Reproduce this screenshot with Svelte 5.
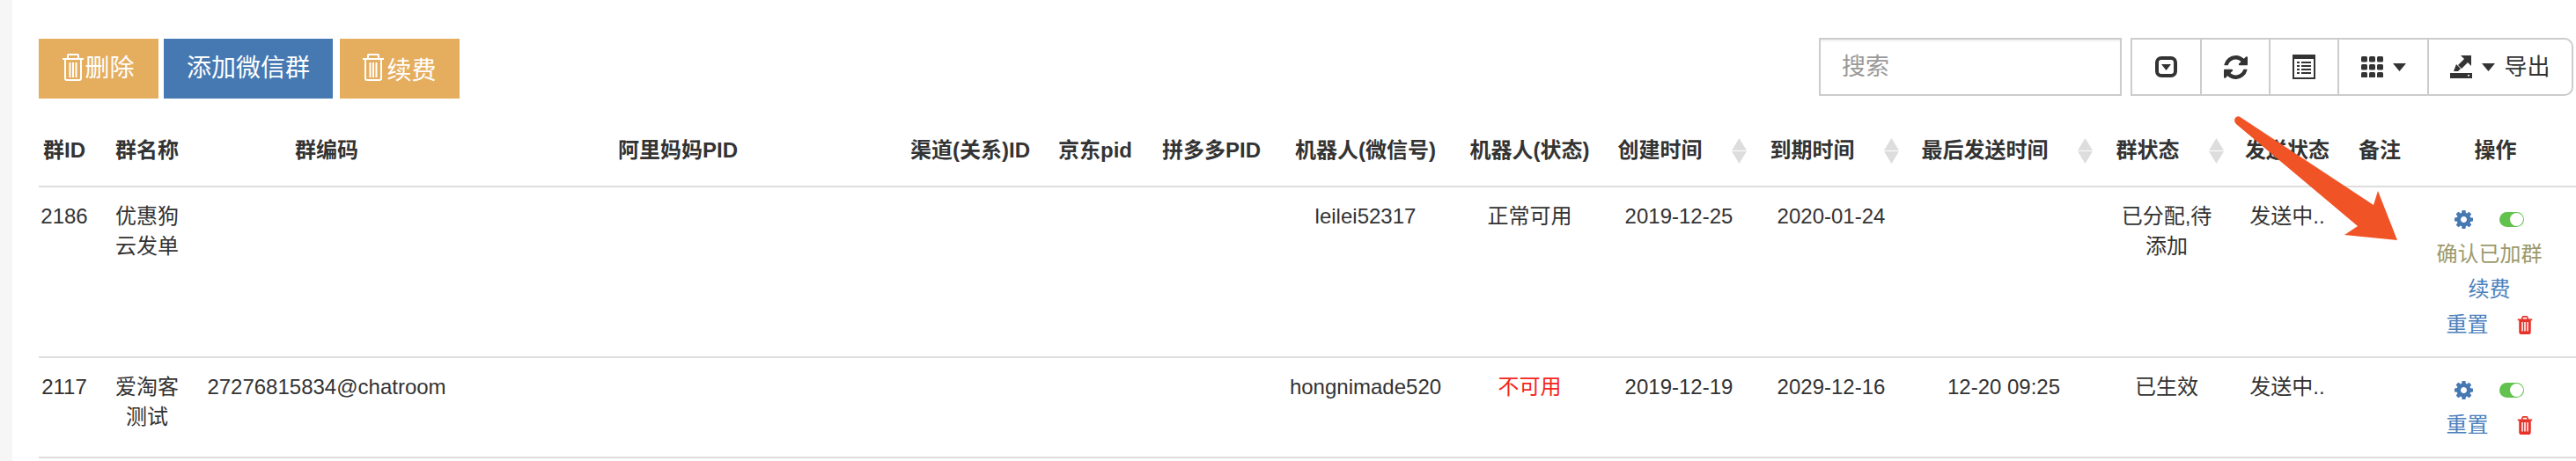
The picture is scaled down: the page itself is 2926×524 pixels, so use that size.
<script>
  const columns = [
    { title: "群ID", width: 58 },
    { title: "群名称", width: 130 },
    { title: "群编码", width: 278 },
    { title: "阿里妈妈PID", width: 520 },
    { title: "渠道(关系)ID", width: 144 },
    { title: "京东pid", width: 140 },
    { title: "拼多多PID", width: 124 },
    { title: "机器人(微信号)", width: 226 },
    { title: "机器人(状态)", width: 147 },
    { title: "创建时间", width: 192, sort: true },
    { title: "到期时间", width: 154, sort: true },
    { title: "最后发送时间", width: 238, sort: true },
    { title: "群状态", width: 132, sort: true },
    { title: "发送状态", width: 142 },
    { title: "备注", width: 68 },
    { title: "操作", width: 189 }
  ];

  const rows = [
    {
      id: "2186", name: "优惠狗云发单", code: "", robot: "leilei52317", ok: true,
      created: "2019-12-25", expire: "2020-01-24", last: "",
      status: "已分配,待添加", send: "发送中..", pending: true
    },
    {
      id: "2117", name: "爱淘客测试", code: "27276815834@chatroom", robot: "hongnimade520", ok: false,
      created: "2019-12-19", expire: "2029-12-16", last: "12-20 09:25",
      status: "已生效", send: "发送中..", pending: false
    }
  ];
</script>

{#snippet thinTrash()}
  <svg class="thin-trash" viewBox="0 0 24 31" fill="none" stroke="currentColor" stroke-width="2">
    <path d="M0 6h24M6 6V2q0-1 1-1h10q1 0 1 1v4M3 6v22q0 2 2 2h14q2 0 2-2V6M8.500 10v17M12 10v17M15.500 10v17" />
  </svg>
{/snippet}

{#snippet caret()}
  <svg class="caret" viewBox="0 0 15 9"><path d="M0 0h15L7.500 9z" /></svg>
{/snippet}

<div class="page">
  <div class="toolbar">
    <div class="actions">
      <button class="btn orange">{@render thinTrash()}删除</button>
      <button class="btn blue">添加微信群</button>
      <button class="btn orange renew">{@render thinTrash()}<span>续费</span></button>
    </div>
    <div class="tools">
      <input class="search" placeholder="搜索" />
      <div class="tool-group">
        <div class="tool first">
          <svg width="25" height="24" viewBox="0 0 25 24">
            <rect x="2" y="2" width="21" height="20" rx="5" fill="none" stroke="#333" stroke-width="4" />
            <path d="M7 9h11l-5.500 7z" fill="#333" />
          </svg>
        </div>
        <div class="tool second">
          <svg width="27" height="27" viewBox="128 128 1536 1536">
            <path fill="#333" d="M1639 1056q0 5-1 7-64 268-268 434.500t-478 166.500q-146 0-282.500-55t-243.500-157l-129 129q-19 19-45 19t-45-19-19-45v-448q0-26 19-45t45-19h448q26 0 45 19t19 45-19 45l-137 137q71 66 161 102t187 36q134 0 250-65t186-179q11-17 53-117 8-23 30-23h192q13 0 22.500 9.500t9.500 22.500zm25-800v448q0 26-19 45t-45 19h-448q-26 0-45-19t-19-45 19-45l138-138q-148-137-349-137-134 0-250 65t-186 179q-11 17-53 117-8 23-30 23h-199q-13 0-22.500-9.500t-9.500-22.500v-7q65-268 270-434.500t480-166.500q146 0 284 55.500t245 156.500l130-129q19-19 45-19t45 19 19 45z" />
          </svg>
        </div>
        <div class="tool third">
          <svg width="26" height="28" viewBox="0 0 26 28">
            <path fill="#333" d="M0 0h26v28H0z" />
            <path fill="#fff" d="M2 5h22v21H2z" />
            <path fill="#333" d="M5 8h3v2H5zM10 8h11v2H10zM5 12h3v2H5zM10 12h11v2H10zM5 16h3v2H5zM10 16h11v2H10zM5 20h3v2H5zM10 20h11v2H10z" />
          </svg>
        </div>
        <div class="tool fourth">
          <svg width="25" height="24" viewBox="0 0 25 24">
            <g fill="#333">
              {#each [0, 9, 18] as y}
                {#each [0, 9, 18] as x}
                  <rect {x} {y} width="7" height="6.500" rx="1.500" />
                {/each}
              {/each}
            </g>
          </svg>
          {@render caret()}
        </div>
        <div class="tool fifth">
          <svg width="25" height="27" viewBox="0 0 25 27">
            <path fill="#333" d="M12 1H24V13L20 9L13 16L9 12L16 5zM7 11l5 5-3 3H4zM1 21h24v6H0V21z" />
            <rect x="20" y="23" width="2" height="1.500" fill="#fff" />
          </svg>
          {@render caret()}
          <span class="export">导出</span>
        </div>
      </div>
    </div>
  </div>

  <table>
    <colgroup>
      {#each columns as col}
        <col style="width: {col.width}px" />
      {/each}
    </colgroup>
    <thead>
      <tr>
        {#each columns as col}
          <th class:op-head={col.title === "操作"}>
            {#if col.sort}
              <span class="sortable">
                {col.title}
                <svg class="sort" width="17" height="29" viewBox="0 0 17 29">
                  <path fill="#ddd" d="M8.500 0L17 14H0zM0 15h17L8.500 29z" />
                </svg>
              </span>
            {:else}
              {col.title}
            {/if}
          </th>
        {/each}
      </tr>
    </thead>
    <tbody>
      {#each rows as row}
        <tr>
          <td>{row.id}</td>
          <td><span class="name">{row.name}</span></td>
          <td>{row.code}</td>
          <td></td>
          <td></td>
          <td></td>
          <td></td>
          <td>{row.robot}</td>
          <td class:bad={!row.ok}>{row.ok ? "正常可用" : "不可用"}</td>
          <td>{row.created}</td>
          <td>{row.expire}</td>
          <td>{row.last}</td>
          <td class="status">{row.status}</td>
          <td>{row.send}</td>
          <td></td>
          <td class="ops">
            <div class="op-row">
              <svg class="gear" viewBox="128 128 1536 1536">
                <path fill="currentColor" d="M1152 896q0-106-75-181t-181-75-181 75-75 181 75 181 181 75 181-75 75-181zm512-109v222q0 12-8 23t-20 13l-185 28q-19 54-39 91 35 50 107 138 10 12 10 25t-9 23q-27 37-99 108t-94 71q-12 0-26-9l-138-108q-44 23-91 38-16 136-29 186-7 28-36 28h-222q-14 0-24.500-8.500t-11.500-21.500l-28-184q-49-16-90-37l-141 107q-10 9-25 9-14 0-25-11-126-114-165-168-7-10-7-23 0-12 8-23 15-21 51-66.500t54-70.500q-27-50-41-99l-183-27q-13-2-21-12.500t-8-23.500v-222q0-12 8-23t19-13l186-28q14-46 39-92-40-57-107-138-10-12-10-24 0-10 9-23 26-36 98.500-107.500t94.500-71.500q13 0 26 10l138 107q44-23 91-38 16-136 29-186 7-28 36-28h222q14 0 24.500 8.500t11.500 21.500l28 184q49 16 90 37l142-107q9-9 24-9 13 0 25 10 129 119 165 170 7 8 7 22 0 12-8 23-15 21-51 66.500t-54 70.500q26 50 41 98l183 28q13 2 21 12.500t8 23.500z" />
              </svg>
              <span class="toggle"><span class="knob"></span></span>
            </div>
            {#if row.pending}
              <div class="op-row confirm">确认已加群</div>
              <div class="op-row link">续费</div>
            {/if}
            <div class="op-row link">
              重置
              <svg class="del" viewBox="128 128 1536 1536" preserveAspectRatio="none">
                <path fill="currentColor" d="M704 1376v-704q0-14-9-23t-23-9h-64q-14 0-23 9t-9 23v704q0 14 9 23t23 9h64q14 0 23-9t9-23zm256 0v-704q0-14-9-23t-23-9h-64q-14 0-23 9t-9 23v704q0 14 9 23t23 9h64q14 0 23-9t9-23zm256 0v-704q0-14-9-23t-23-9h-64q-14 0-23 9t-9 23v704q0 14 9 23t23 9h64q14 0 23-9t9-23zm-544-992h448l-48-117q-7-9-17-11h-317q-10 2-17 11zm928 32v64q0 14-9 23t-23 9h-96v948q0 83-47 143.500t-113 60.500h-832q-66 0-113-58.500t-47-141.500v-952h-96q-14 0-23-9t-9-23v-64q0-14 9-23t23-9h309l70-167q15-37 54-63t79-26h320q40 0 79 26t54 63l70 167h309q14 0 23 9t9 23z" />
              </svg>
            </div>
          </td>
        </tr>
      {/each}
    </tbody>
  </table>

  <!-- annotation drawn over the screenshot -->
  <svg class="arrow" width="200" height="150" viewBox="2530 128 200 150">
    <path fill="#f05326" d="M2546 134L2696 233L2701 217L2723 273L2663 267L2678 257L2540 141Q2536 136 2540 133Q2543 131 2546 134z" />
  </svg>
</div>

<style>
  :global(body) {
    margin: 0;
    background: #f6f6f6;
  }

  .page {
    position: relative;
    margin-left: 14px;
    height: 524px;
    overflow: hidden;
    background: #fff;
    padding: 43px 0 0 30px;
    box-sizing: border-box;
    color: #333;
    font-family: "Liberation Sans", "Noto Sans CJK SC", sans-serif;
    font-size: 24px;
    line-height: 34px;
  }

  .toolbar {
    display: flex;
    justify-content: space-between;
    align-items: flex-start;
    padding-right: 3px;
  }

  .actions {
    display: flex;
    gap: 6px;
    margin-top: 1px;
  }

  .btn {
    display: flex;
    align-items: center;
    justify-content: center;
    width: 136px;
    height: 68px;
    padding: 0;
    border: none;
    color: #fff;
    font: inherit;
    font-size: 28px;
  }

  .orange {
    background: #e5ae5f;
  }

  .blue {
    width: 192px;
    background: #4679b2;
  }

  .renew {
    margin-left: 2px;
  }

  .renew span {
    margin: 5px 0 0 2px;
  }

  .thin-trash {
    width: 24px;
    height: 31px;
    margin: -3px 1px 0 0;
  }

  .tools {
    display: flex;
    gap: 10px;
  }

  .search {
    width: 344px;
    height: 66px;
    box-sizing: border-box;
    border: 2px solid #ccc;
    padding: 0 24px;
    font: inherit;
    font-size: 27px;
    outline: none;
    box-shadow: inset 0 2px 2px rgba(0, 0, 0, 0.06);
  }

  .search::placeholder {
    color: #999;
  }

  .tool-group {
    display: flex;
    height: 66px;
    box-sizing: border-box;
    border: 2px solid #ccc;
    border-radius: 0 10px 10px 0;
  }

  .tool {
    display: flex;
    align-items: center;
    justify-content: center;
    box-sizing: border-box;
    border-left: 2px solid #ccc;
    width: 78px;
  }

  .first {
    border-left: none;
    width: 77px;
  }

  .fourth {
    width: 102px;
    gap: 11px;
  }

  .fifth {
    width: 164px;
    gap: 11px;
    margin-top: -1px;
  }

  .caret {
    width: 15px;
    height: 9px;
    fill: #333;
    margin-top: 1px;
  }

  .export {
    font-size: 26px;
    margin-left: -1px;
  }

  table {
    width: 2882px;
    margin-top: 29px;
    table-layout: fixed;
    border-collapse: separate;
    border-spacing: 0;
  }

  th {
    padding: 13px 0 23px;
    border-bottom: 2px solid #ddd;
    font-weight: bold;
    text-align: center;
    white-space: nowrap;
  }

  .op-head {
    padding-left: 6px;
  }

  .sortable {
    display: inline-flex;
    align-items: center;
    gap: 33px;
    padding-left: 7px;
  }

  td {
    padding: 16px 0;
    border-bottom: 2px solid #ddd;
    text-align: center;
    vertical-align: top;
    white-space: nowrap;
  }

  .name {
    display: block;
    width: 72px;
    margin: 0 auto;
    white-space: normal;
  }

  .status {
    padding-left: 8px;
    padding-right: 8px;
    white-space: normal;
  }

  .bad {
    color: #f5261c;
  }

  .ops {
    padding-right: 8px;
  }

  .op-row {
    display: flex;
    align-items: center;
    justify-content: center;
    height: 40px;
  }

  .op-row:first-child {
    gap: 30px;
  }

  .confirm {
    color: #9c9a6c;
  }

  .link {
    color: #4b80bd;
  }

  .gear {
    width: 21px;
    height: 21px;
    color: #4679b2;
  }

  .toggle {
    display: flex;
    justify-content: flex-end;
    width: 28px;
    height: 17px;
    box-sizing: border-box;
    padding: 1px;
    border-radius: 9px;
    background: #62c24e;
  }

  .knob {
    width: 15px;
    height: 15px;
    border-radius: 50%;
    background: #fff;
  }

  .del {
    width: 18px;
    height: 21px;
    margin-left: 32px;
    color: #e8332a;
  }

  .arrow {
    position: absolute;
    left: 2516px;
    top: 128px;
  }
</style>
